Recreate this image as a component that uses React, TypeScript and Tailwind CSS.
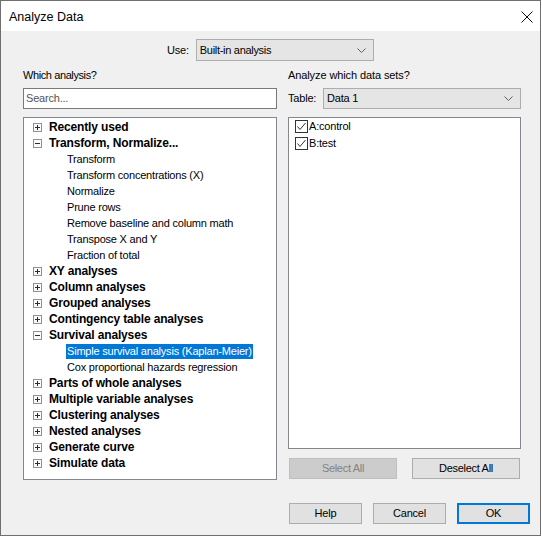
import React from "react";

const Expander = ({ open }: { open: boolean }) => (
  <svg width="9" height="9" viewBox="0 0 9 9" className="shrink-0">
    <rect x="0.5" y="0.5" width="8" height="8" fill="#fafafa" stroke="#919191" />
    <line x1="2" y1="4.5" x2="7" y2="4.5" stroke="#1b2f4a" />
    {!open && <line x1="4.5" y1="2" x2="4.5" y2="7" stroke="#1b2f4a" />}
  </svg>
);

const Chevron = () => (
  <svg width="9" height="5" viewBox="0 0 9 5" className="shrink-0">
    <polyline points="0.5,0.5 4.5,4.5 8.5,0.5" fill="none" stroke="#606060" />
  </svg>
);

const Check = () => (
  <svg width="13" height="13" viewBox="0 0 13 13" className="shrink-0">
    <rect x="0.5" y="0.5" width="12" height="12" fill="#fff" stroke="#333" />
    <polyline points="2.5,6.5 5,9.5 10.5,3" fill="none" stroke="#333" strokeWidth="1" />
  </svg>
);

type Node = { label: string; open?: boolean; children?: { label: string; selected?: boolean }[] };

const tree: Node[] = [
  { label: "Recently used" },
  {
    label: "Transform, Normalize...",
    open: true,
    children: [
      { label: "Transform" },
      { label: "Transform concentrations (X)" },
      { label: "Normalize" },
      { label: "Prune rows" },
      { label: "Remove baseline and column math" },
      { label: "Transpose X and Y" },
      { label: "Fraction of total" },
    ],
  },
  { label: "XY analyses" },
  { label: "Column analyses" },
  { label: "Grouped analyses" },
  { label: "Contingency table analyses" },
  {
    label: "Survival analyses",
    open: true,
    children: [
      { label: "Simple survival analysis (Kaplan-Meier)", selected: true },
      { label: "Cox proportional hazards regression" },
    ],
  },
  { label: "Parts of whole analyses" },
  { label: "Multiple variable analyses" },
  { label: "Clustering analyses" },
  { label: "Nested analyses" },
  { label: "Generate curve" },
  { label: "Simulate data" },
];

export default function App() {
  return (
    <div className="w-[542px] h-[537px] bg-white font-['Liberation_Sans',Arial,sans-serif] text-black">
      <div className="w-[541px] h-[536px] border border-[#6f6f6f] flex flex-col bg-[#f0f0f0]">
        {/* Title bar */}
        <div className="h-[30px] bg-white flex items-center justify-between pl-[8px] pr-[7px] shrink-0">
          <span className="text-[12.5px] leading-[14px] pt-[1px]">Analyze Data</span>
          <svg width="12" height="12" viewBox="0 0 12 12" className="mt-[1px]">
            <line x1="0.5" y1="0.5" x2="11.5" y2="11.5" stroke="#111" strokeWidth="1" />
            <line x1="11.5" y1="0.5" x2="0.5" y2="11.5" stroke="#111" strokeWidth="1" />
          </svg>
        </div>

        {/* Use row */}
        <div className="mt-[8px] h-[22px] flex items-center pl-[166px]">
          <span className="text-[11px] tracking-[-0.2px]">Use:</span>
          <div className="ml-[7px] w-[178px] h-[22px] bg-[#e5e5e5] border border-[#adadad] flex items-center justify-between pl-[3px] pr-[7px]">
            <span className="text-[11px] tracking-[-0.3px]">Built-in analysis</span>
            <Chevron />
          </div>
        </div>

        {/* Columns */}
        <div className="mt-[7px] flex pl-[22px]">
          {/* Left */}
          <div className="w-[254px] flex flex-col">
            <div className="h-[14px] text-[11px] leading-[14px] tracking-[-0.4px]">Which analysis?</div>
            <div className="mt-[6px] h-[21px] bg-white border border-[#7a7a7a] flex items-center pl-[2px]">
              <span className="text-[11px] tracking-[-0.2px] text-[#555]">Search...</span>
            </div>
            <div className="mt-[8px] h-[363px] bg-white border border-[#828790] pt-[1px]">
              {tree.map((n) => (
                <React.Fragment key={n.label}>
                  <div className="h-[16px] flex items-center pl-[9px]">
                    <Expander open={!!n.open} />
                    <span className="ml-[7px] text-[12px] font-bold tracking-[-0.15px] leading-[16px]">{n.label}</span>
                  </div>
                  {n.children?.map((c) => (
                    <div key={c.label} className="h-[16px] flex items-center pl-[42px]">
                      <span
                        className={
                          "px-[1px] text-[11px] tracking-[-0.2px] leading-[15px] " +
                          (c.selected ? "bg-[#0078d7] text-white" : "")
                        }
                      >
                        {c.label}
                      </span>
                    </div>
                  ))}
                </React.Fragment>
              ))}
            </div>
          </div>

          {/* Right */}
          <div className="ml-[11px] w-[233px] flex flex-col">
            <div className="h-[14px] text-[11px] leading-[14px] tracking-[-0.1px]">Analyze which data sets?</div>
            <div className="mt-[6px] h-[21px] flex items-center">
              <span className="w-[35px] text-[11px] tracking-[-0.2px]">Table:</span>
              <div className="flex-1 h-[21px] bg-[#e5e5e5] border border-[#adadad] flex items-center justify-between pl-[3px] pr-[7px]">
                <span className="text-[11px] tracking-[-0.2px]">Data 1</span>
                <Chevron />
              </div>
            </div>
            <div className="mt-[8px] h-[332px] bg-white border border-[#828790] pl-[6px]">
              <div className="h-[17px] flex items-center">
                <Check />
                <span className="ml-[1px] text-[11px] tracking-[-0.2px]">A:control</span>
              </div>
              <div className="h-[17px] flex items-center">
                <Check />
                <span className="ml-[1px] text-[11px] tracking-[-0.2px]">B:test</span>
              </div>
            </div>
            <div className="mt-[9px] h-[21px] flex justify-between pl-[1px] pr-[1px]">
              <div className="w-[108px] h-[21px] bg-[#cccccc] border border-[#bfbfbf] flex items-center justify-center text-[11px] tracking-[-0.3px] text-[#838383]">
                Select All
              </div>
              <div className="w-[108px] h-[21px] bg-[#e1e1e1] border border-[#adadad] flex items-center justify-center text-[11px] tracking-[-0.3px]">
                Deselect All
              </div>
            </div>
          </div>
        </div>

        {/* Bottom buttons */}
        <div className="mt-[23px] flex justify-end gap-[11px] pr-[10px]">
          <div className="w-[73px] h-[21px] bg-[#e1e1e1] border border-[#adadad] flex items-center justify-center text-[11px] tracking-[-0.2px]">
            Help
          </div>
          <div className="w-[73px] h-[21px] bg-[#e1e1e1] border border-[#adadad] flex items-center justify-center text-[11px] tracking-[-0.2px]">
            Cancel
          </div>
          <div className="w-[73px] h-[21px] bg-[#e1e1e1] border-2 border-[#0078d7] flex items-center justify-center text-[11px] tracking-[-0.2px]">
            OK
          </div>
        </div>
      </div>
    </div>
  );
}
